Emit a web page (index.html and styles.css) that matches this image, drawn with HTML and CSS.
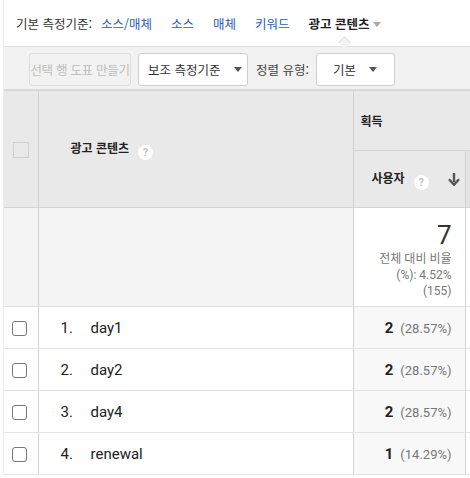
FILE: index.html
```html
<!DOCTYPE html>
<html lang="ko">
<head>
<meta charset="utf-8">
<title>광고 콘텐츠</title>
<link rel="stylesheet" href="styles.css">
</head>
<body>
<div class="report">
  <nav class="dims">
    <span class="dims-label">기본 측정기준:</span>
    <a class="dim-link" href="#">소스/매체</a>
    <a class="dim-link" href="#">소스</a>
    <a class="dim-link" href="#">매체</a>
    <a class="dim-link" href="#">키워드</a>
    <span class="dim-current">광고 콘텐츠<span class="caret caret-light"></span><span class="notch"></span></span>
  </nav>

  <div class="toolbar">
    <button class="btn btn-disabled" disabled>선택 행 도표 만들기</button>
    <button class="btn btn-secondary">보조 측정기준<span class="caret"></span></button>
    <span class="sort-label">정렬 유형:</span>
    <button class="btn btn-sort">기본<span class="caret"></span></button>
  </div>

  <table class="grid">
    <colgroup>
      <col class="c-check">
      <col class="c-dim">
      <col class="c-metric">
      <col class="c-more">
    </colgroup>
    <thead>
      <tr class="h-group">
        <th class="h-check" rowspan="2"><span class="box box-head"></span></th>
        <th class="h-dim" rowspan="2">광고 콘텐츠<span class="help">?</span></th>
        <th class="h-acq" colspan="2">획득</th>
      </tr>
      <tr class="h-metric">
        <th class="h-users">사용자<span class="help">?</span>
          <svg class="sort-arrow" viewBox="0 0 12 14" width="12" height="14"><path d="M6 1v9" stroke="#555" stroke-width="2.4"/><path d="M1 7.2l5 5.6 5-5.6" fill="none" stroke="#555" stroke-width="2.4" stroke-linejoin="round"/></svg>
        </th>
        <th class="h-more"></th>
      </tr>
    </thead>
    <tbody>
      <tr class="total">
        <td class="t-check"></td>
        <td class="t-dim"></td>
        <td class="t-metric">
          <div class="t-value">7</div>
          <div class="t-note">전체 대비 비율<br>(%): 4.52%<br>(155)</div>
        </td>
        <td class="t-more"></td>
      </tr>
      <tr class="row">
        <td class="r-check"><span class="box"></span></td>
        <td class="r-dim"><span class="idx">1.</span>day1</td>
        <td class="r-metric"><b>2</b><span class="pct">(28.57%)</span></td>
        <td class="r-more"></td>
      </tr>
      <tr class="row">
        <td class="r-check"><span class="box"></span></td>
        <td class="r-dim"><span class="idx">2.</span>day2</td>
        <td class="r-metric"><b>2</b><span class="pct">(28.57%)</span></td>
        <td class="r-more"></td>
      </tr>
      <tr class="row">
        <td class="r-check"><span class="box"></span></td>
        <td class="r-dim"><span class="idx">3.</span>day4</td>
        <td class="r-metric"><b>2</b><span class="pct">(28.57%)</span></td>
        <td class="r-more"></td>
      </tr>
      <tr class="row">
        <td class="r-check"><span class="box"></span></td>
        <td class="r-dim"><span class="idx">4.</span>renewal</td>
        <td class="r-metric"><b>1</b><span class="pct">(14.29%)</span></td>
        <td class="r-more"></td>
      </tr>
    </tbody>
  </table>
</div>
</body>
</html>
```

FILE: styles.css
```css
html, body {
  margin: 0;
  padding: 0;
  background: #fff;
}

body {
  font-family: Roboto, "Noto Sans CJK KR", "Noto Sans", sans-serif;
  color: #222;
}

.report {
  margin-left: 3px;
  border-left: 1px solid #ececec;
  width: 466px;
  overflow: hidden;
}

/* primary dimension switcher */
.dims {
  height: 46px;
  display: flex;
  align-items: center;
  padding-left: 12px;
  padding-top: 1px;
  box-sizing: border-box;
  font-family: "Noto Sans CJK KR", sans-serif;
  font-size: 12.5px;
  color: #333;
  white-space: nowrap;
}

.dims-label {
  margin-right: 9px;
}

.dim-link {
  color: #2a5bbd;
  text-decoration: none;
  margin-right: 19px;
}

.dim-current {
  position: relative;
  font-weight: bold;
  color: #222;
  display: inline-flex;
  align-items: center;
}

.caret {
  display: inline-block;
  width: 0;
  height: 0;
  border-left: 4.5px solid transparent;
  border-right: 4.5px solid transparent;
  border-top: 5px solid #555;
}

.caret-light {
  border-top-color: #aaa;
  margin-left: 4px;
  margin-top: 2px;
}

/* small pointer from the toolbar up to the selected dimension */
.notch {
  position: absolute;
  left: 32px;
  top: 24px;
  width: 8px;
  height: 8px;
  background: #f2f2f2;
  border-left: 1px solid #e0e0e0;
  border-top: 1px solid #e0e0e0;
  transform: rotate(45deg);
}

/* toolbar */
.toolbar {
  height: 43px;
  box-sizing: border-box;
  background: #f2f2f2;
  border-top: 1px solid #e0e0e0;
  display: flex;
  align-items: flex-start;
  padding: 6px 0 0 25px;
  font-family: "Noto Sans CJK KR", sans-serif;
  font-size: 12.5px;
  white-space: nowrap;
}

.btn {
  height: 33px;
  box-sizing: border-box;
  border: 1px solid #cfcfcf;
  border-radius: 3px;
  background: #fff;
  font-family: "Noto Sans CJK KR", sans-serif;
  font-size: 12.5px;
  color: #333;
  display: inline-flex;
  align-items: center;
  padding: 0;
  white-space: nowrap;
  flex: none;
}

.btn-disabled {
  width: 102px;
  justify-content: center;
  background: #f2f2f2;
  border-color: #dcdcdc;
  color: #bdbdbd;
  overflow: visible;
  letter-spacing: -0.3px;
}

.btn-secondary {
  width: 110px;
  margin-left: 7px;
  padding-left: 9px;
}

.btn-secondary .caret {
  margin-left: 13px;
}

.sort-label {
  margin-left: 8px;
  line-height: 33px;
  color: #444;
}

.btn-sort {
  width: 79px;
  margin-left: 7px;
  padding-left: 16px;
}

.btn-sort .caret {
  margin-left: 13px;
}

/* data table */
.grid {
  border-collapse: collapse;
  table-layout: fixed;
  width: 556px;
  border-top: 2px solid #d8d8d8;
}

.c-check { width: 34px; }
.c-dim { width: 315px; }
.c-metric { width: 112px; }
.c-more { width: 95px; }

.grid th, .grid td {
  padding: 0;
  border-right: 1px solid #d2d2d2;
}

thead th {
  background: #e9e9e9;
  font-family: "Noto Sans CJK KR", sans-serif;
  font-size: 12px;
  font-weight: bold;
  color: #222;
  text-align: left;
}

.h-group th {
  height: 59px;
}

.h-acq {
  border-bottom: 1px solid #d4d4d4;
  padding-left: 7px !important;
}

.h-metric th {
  height: 56px;
}

.h-check {
  text-align: center;
}

.h-dim {
  padding-left: 32px !important;
}

.h-users {
  padding-left: 18px !important;
  position: relative;
}

.h-more {
  background: #e4e4e4;
}

.help {
  display: inline-block;
  width: 15px;
  height: 15px;
  border-radius: 50%;
  background: #fff;
  color: #c4c4c4;
  font-family: Roboto, sans-serif;
  font-size: 11px;
  font-weight: bold;
  line-height: 15px;
  text-align: center;
  margin-left: 9px;
  vertical-align: -3px;
}

.sort-arrow {
  position: absolute;
  right: 5px;
  top: 21px;
}

.box {
  display: inline-block;
  width: 13px;
  height: 13px;
  border: 1px solid #777;
  border-radius: 3px;
  background: #fff;
  vertical-align: middle;
}

.box-head {
  width: 14px;
  height: 14px;
  border-color: #cfcfcf;
  border-radius: 0;
  background: #e9e9e9;
}

/* totals row */
.total td {
  height: 98px;
  border-top: 1px solid #d4d4d4;
  border-bottom: 1px solid #e0e0e0;
  background: #f4f4f4;
}

.total .t-metric {
  background: #fff;
  text-align: right;
  padding-right: 13px;
  vertical-align: top;
}

.total .t-more {
  background: #fff;
}

.t-value {
  font-size: 26px;
  line-height: 28px;
  margin-top: 13px;
  color: #333;
}

.t-note {
  font-family: Roboto, "Noto Sans CJK KR", sans-serif;
  font-size: 12px;
  line-height: 16px;
  color: #777;
  margin-top: 2px;
}

/* data rows */
.row td {
  height: 41px;
  border-bottom: 1px solid #e3e3e3;
  font-size: 15px;
}

.r-check {
  text-align: center;
}

.r-check .box {
  margin-left: -2px;
}

.r-dim {
  padding-left: 22px !important;
}

.idx {
  display: inline-block;
  width: 30px;
}

.r-metric {
  background: #f8f8f8;
  text-align: right;
  padding-right: 13px !important;
}

.r-metric b {
  font-weight: bold;
  color: #222;
}

.pct {
  font-size: 13px;
  color: #777;
  margin-left: 7px;
}
```
